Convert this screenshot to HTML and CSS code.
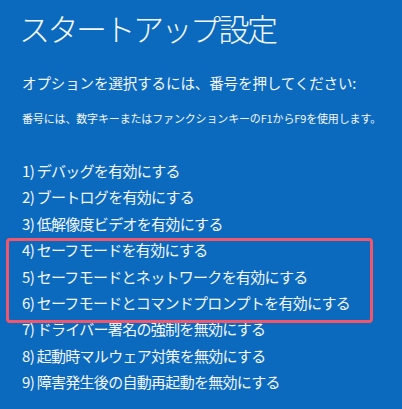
FILE: index.html
```html
<!DOCTYPE html>
<html lang="ja">
<head>
<meta charset="utf-8">
<link rel="stylesheet" href="styles.css">
</head>
<body>
<div class="screen">
  <h1 class="title">スタートアップ設定</h1>
  <p class="prompt">オプションを選択するには、番号を押してください:</p>
  <p class="note">番号には、数字キーまたはファンクションキーのF1からF9を使用します。</p>
  <ol class="options">
    <li>1) デバッグを有効にする</li>
    <li>2) ブートログを有効にする</li>
    <li>3) 低解像度ビデオを有効にする</li>
    <li>4) セーフモードを有効にする</li>
    <li>5) セーフモードとネットワークを有効にする</li>
    <li>6) セーフモードとコマンドプロンプトを有効にする</li>
    <li>7) ドライバー署名の強制を無効にする</li>
    <li>8) 起動時マルウェア対策を無効にする</li>
    <li>9) 障害発生後の自動再起動を無効にする</li>
  </ol>
  <div class="highlight"></div>
</div>
</body>
</html>
```

FILE: styles.css
```css
html, body {
  margin: 0;
  padding: 0;
  background: #0b6abe;
}
.screen {
  position: relative;
  width: 402px;
  height: 409px;
  overflow: hidden;
  background: #0b6abe;
  color: #f3f7fb;
  font-family: "Noto Sans CJK JP", "Noto Sans", sans-serif;
  padding: 9px 0 0 22px;
  box-sizing: border-box;
}
.title {
  margin: 0 0 0 -3px;
  font-size: 31px;
  line-height: 38px;
  font-weight: 300;
  letter-spacing: -2.5px;
}
.prompt {
  margin: 25px 0 0 0;
  font-size: 14.5px;
  line-height: 22px;
  letter-spacing: -0.1px;
}
.note {
  margin: 16px 0 0 0;
  font-size: 11px;
  line-height: 16px;
  letter-spacing: -0.15px;
}
.options {
  list-style: none;
  margin: 32px 0 0 0;
  padding: 0;
}
.options li {
  font-size: 15px;
  line-height: 26.4px;
  height: 26.4px;
  letter-spacing: -0.7px;
  white-space: nowrap;
}
.num {
  margin-right: 2px;
}
.highlight {
  position: absolute;
  left: 6px;
  top: 238px;
  width: 367px;
  height: 85px;
  box-sizing: border-box;
  border: 3.5px solid #f1566b;
  border-radius: 4px;
}
```
